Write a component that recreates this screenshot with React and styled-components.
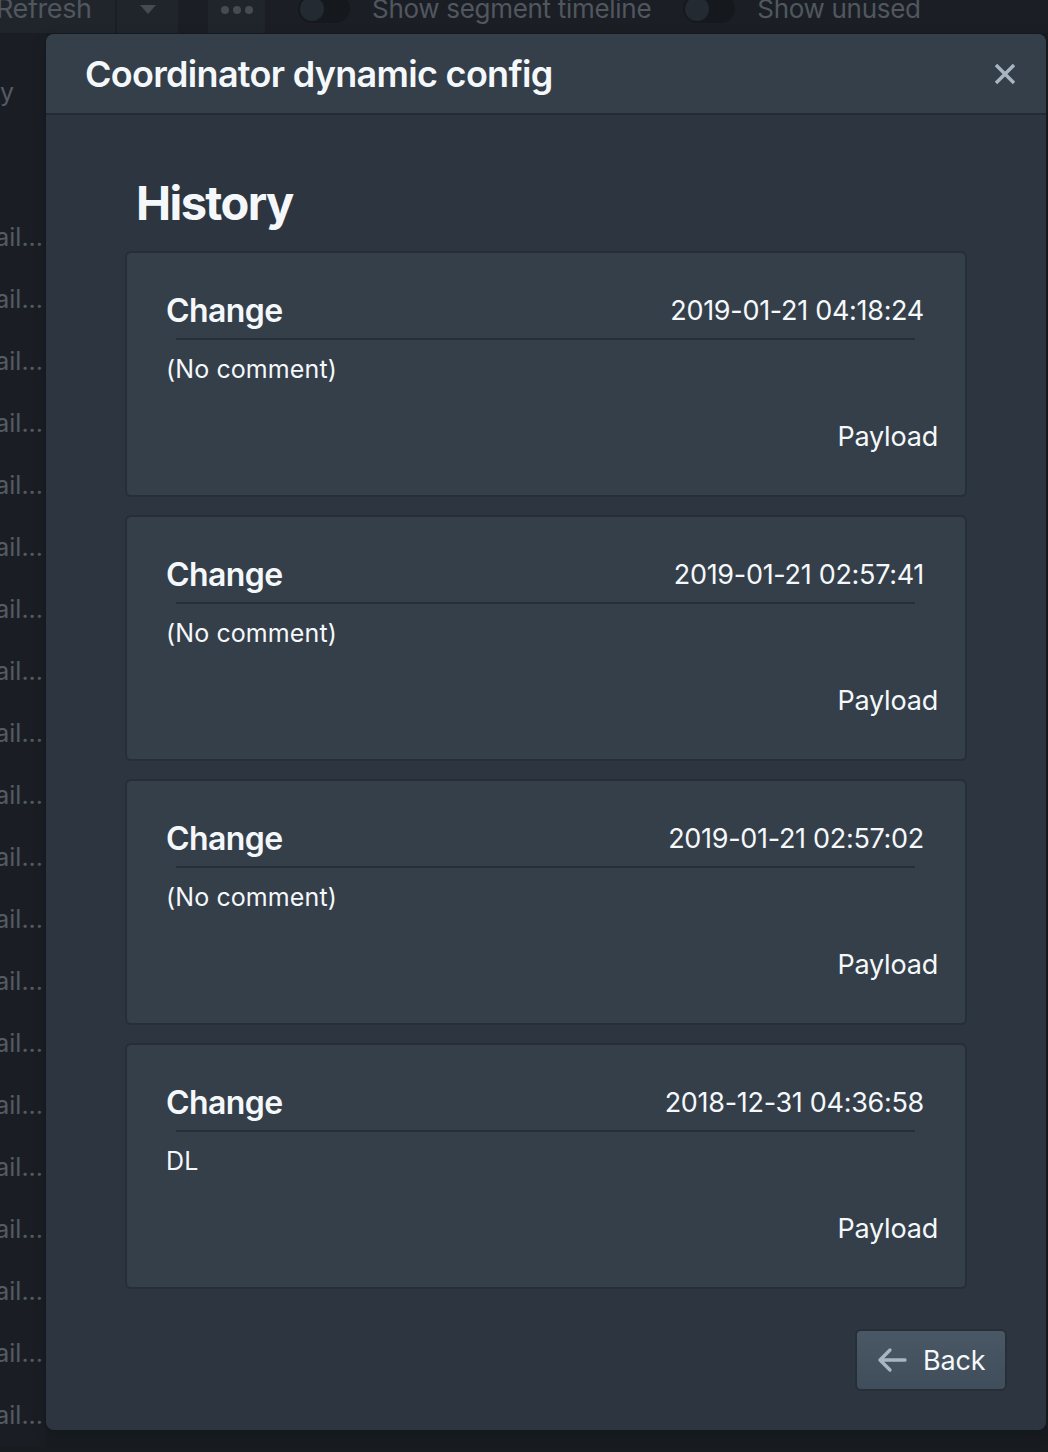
import React from 'react'
import styled, { createGlobalStyle } from 'styled-components'

const GlobalStyle = createGlobalStyle`
  html, body {
    margin: 0;
    padding: 0;
    background: #181c21;
    font-family: Inter, "Noto Sans", "Liberation Sans", sans-serif;
    -webkit-font-smoothing: antialiased;
  }
`

// background page (dimmed under the overlay)

const Page = styled.div`
  position: relative;
  width: 1048px;
  height: 1452px;
  overflow: hidden;
  background: #181c21;
`

const Toolbar = styled.div`
  display: flex;
  align-items: flex-end;
  height: 33px;
  overflow: hidden;
  background: #1b1f25;
`

const ToolButton = styled.div`
  display: flex;
  align-items: flex-end;
  justify-content: ${(p) => (p.start ? 'flex-start' : 'center')};
  height: 60px;
  width: ${(p) => p.w}px;
  margin-left: ${(p) => p.gap || 0}px;
  padding-bottom: 11px;
  box-sizing: border-box;
  background: #20252c;
  color: #50575f;
  font-size: 28px;
  line-height: 1;
`

const RefreshLabel = styled.span`
  margin-left: -4px;
  color: #50575f;
  font-size: 27px;
  letter-spacing: -0.4px;
`

const Caret = styled.span`
  width: 0;
  height: 0;
  margin-bottom: 8px;
  border-left: 8px solid transparent;
  border-right: 8px solid transparent;
  border-top: 9px solid #444b53;
`

const Dots = styled.span`
  display: flex;
  gap: 4px;
  margin-bottom: 8px;

  i {
    width: 8px;
    height: 8px;
    border-radius: 50%;
    background: #444b53;
  }
`

const Switch = styled.div`
  position: relative;
  width: 52px;
  height: 28px;
  margin: 0 22px 10px ${(p) => p.gap}px;
  border-radius: 14px;
  background: #15191d;

  &::before {
    content: '';
    position: absolute;
    left: 2px;
    top: 2px;
    width: 24px;
    height: 24px;
    border-radius: 50%;
    background: #242a31;
  }
`

const SwitchLabel = styled.span`
  margin-bottom: 11px;
  color: #50575f;
  font-size: 26px;
  line-height: 1;
  letter-spacing: -0.3px;
`

const SideList = styled.div`
  display: flex;
  flex-direction: column;
  width: 46px;
  padding-top: 44px;
  background: #1a1e24;
`

const SideItem = styled.div`
  height: ${(p) => p.h || 62}px;
  display: flex;
  align-items: ${(p) => (p.top ? 'flex-start' : 'center')};
  justify-content: ${(p) => (p.top ? 'flex-start' : 'flex-end')};
  padding-right: 3px;
  color: #545b62;
  font-size: 25px;
  white-space: nowrap;
  overflow: hidden;
`

// dialog

const Dialog = styled.div`
  position: absolute;
  top: 34px;
  left: 46px;
  width: 1000px;
  height: 1396px;
  display: flex;
  flex-direction: column;
  border-radius: 8px;
  background: #2d3640;
  box-shadow: 0 0 0 1px rgba(16, 22, 26, 0.3), 0 4px 12px rgba(16, 22, 26, 0.5);
  overflow: hidden;
`

const DialogHeader = styled.div`
  display: flex;
  align-items: center;
  justify-content: space-between;
  height: 79px;
  padding: 0 30px 0 39px;
  border-bottom: 2px solid #222a32;
  background: #343f4a;
`

const DialogTitle = styled.h4`
  margin: 0;
  color: #f5f8fa;
  font-size: 36px;
  font-weight: 600;
  letter-spacing: -0.7px;
`

const CloseButton = styled.button`
  display: flex;
  padding: 0;
  border: none;
  background: none;
`

const Body = styled.div`
  flex: 1;
  padding: 60px 79px 0;
`

const Heading = styled.h2`
  margin: 0 0 20px;
  padding-left: 11px;
  color: #f5f8fa;
  font-size: 47px;
  line-height: 56px;
  font-weight: 700;
  letter-spacing: -1.6px;
`

const CardList = styled.div`
  display: flex;
  flex-direction: column;
  gap: 18px;
`

const Card = styled.div`
  padding: 40px 27px 29px 39px;
  border: 2px solid #262e37;
  border-radius: 6px;
  background: #343f4a;
  color: #f5f8fa;
`

const CardHead = styled.div`
  display: flex;
  align-items: center;
  justify-content: space-between;
  height: 34px;
  padding-right: 14px;
`

const CardTitle = styled.span`
  font-size: 32px;
  font-weight: 600;
  letter-spacing: -0.6px;
`

const Stamp = styled.span`
  font-size: 27px;
  letter-spacing: -0.3px;
`

const Rule = styled.div`
  height: 2px;
  margin: 11px 23px 0 10px;
  background: #262e37;
`

const Comment = styled.div`
  margin-top: 13px;
  font-size: 25px;
  line-height: 32px;
  letter-spacing: 0.1px;
`

const CardFoot = styled.div`
  display: flex;
  justify-content: flex-end;
  margin-top: 21px;
`

const MinimalButton = styled.button`
  height: 60px;
  padding: 0;
  border: none;
  background: none;
  color: #f5f8fa;
  font-family: inherit;
  font-size: 27px;
  letter-spacing: -0.2px;
`

const Footer = styled.div`
  display: flex;
  justify-content: flex-end;
  padding: 0 39px 39px;
`

const BackButton = styled.button`
  display: flex;
  align-items: center;
  gap: 16px;
  width: 152px;
  height: 62px;
  padding: 0 0 0 20px;
  box-sizing: border-box;
  border: 2px solid #262e37;
  border-radius: 6px;
  background: linear-gradient(#4a5764, #404d5a);
  color: #f5f8fa;
  font-family: inherit;
  font-size: 27px;
  letter-spacing: -0.2px;
`

const history = [
  { time: '2019-01-21 04:18:24', comment: '(No comment)' },
  { time: '2019-01-21 02:57:41', comment: '(No comment)' },
  { time: '2019-01-21 02:57:02', comment: '(No comment)' },
  { time: '2018-12-31 04:36:58', comment: 'DL' },
]

const CloseIcon = () => (
  <svg width="22" height="22" viewBox="0 0 22 22">
    <path d="M2 2 L20 20 M20 2 L2 20" stroke="#a7b6c2" strokeWidth="3.4" strokeLinecap="butt" />
  </svg>
)

const ArrowLeft = () => (
  <svg width="30" height="26" viewBox="0 0 30 26">
    <path
      d="M28 13 H4 M13 3 L3 13 L13 23"
      fill="none"
      stroke="#a7b6c2"
      strokeWidth="3.4"
      strokeLinecap="round"
      strokeLinejoin="round"
    />
  </svg>
)

export default function App() {
  return (
    <Page>
      <GlobalStyle />
      <Toolbar>
        <ToolButton w={115} start>
          <RefreshLabel>Refresh</RefreshLabel>
        </ToolButton>
        <ToolButton w={61} gap={2}>
          <Caret />
        </ToolButton>
        <ToolButton w={57} gap={30}>
          <Dots>
            <i />
            <i />
            <i />
          </Dots>
        </ToolButton>
        <Switch gap={33} />
        <SwitchLabel>Show segment timeline</SwitchLabel>
        <Switch gap={32} />
        <SwitchLabel>Show unused</SwitchLabel>
      </Toolbar>
      <SideList>
        <SideItem h={129} top>
          y
        </SideItem>
        {Array.from({ length: 20 }).map((_, i) => (
          <SideItem key={i}>ail...</SideItem>
        ))}
      </SideList>

      <Dialog>
        <DialogHeader>
          <DialogTitle>Coordinator dynamic config</DialogTitle>
          <CloseButton aria-label="Close">
            <CloseIcon />
          </CloseButton>
        </DialogHeader>
        <Body>
          <Heading>History</Heading>
          <CardList>
            {history.map((h) => (
              <Card key={h.time}>
                <CardHead>
                  <CardTitle>Change</CardTitle>
                  <Stamp>{h.time}</Stamp>
                </CardHead>
                <Rule />
                <Comment>{h.comment}</Comment>
                <CardFoot>
                  <MinimalButton>Payload</MinimalButton>
                </CardFoot>
              </Card>
            ))}
          </CardList>
        </Body>
        <Footer>
          <BackButton>
            <ArrowLeft />
            Back
          </BackButton>
        </Footer>
      </Dialog>
    </Page>
  )
}
